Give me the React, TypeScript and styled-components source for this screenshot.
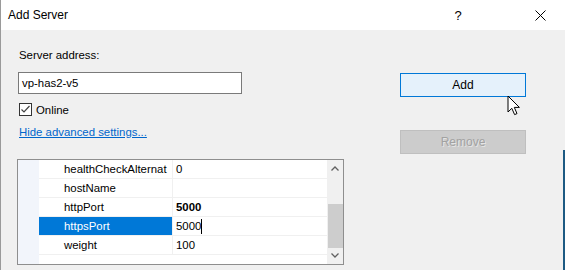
import styled, { createGlobalStyle } from 'styled-components'

const Global = createGlobalStyle`
  html, body {
    margin: 0;
    padding: 0;
    width: 565px;
    height: 270px;
    overflow: hidden;
    background: #f0f0f0;
  }
  * {
    box-sizing: border-box;
  }
`

const Window = styled.div`
  display: flex;
  flex-direction: column;
  width: 565px;
  height: 270px;
  border-left: 1px solid #9a9a9a;
  font-family: 'Segoe UI', 'Liberation Sans', Arial, sans-serif;
  font-size: 11.4px;
  color: #000;
  background: #f0f0f0;
  position: relative;

  /* desktop showing past the right edge */
  &::after {
    content: '';
    position: absolute;
    right: 0;
    top: 150px;
    bottom: 0;
    width: 2px;
    background: #1d5a83;
  }
`

const TitleBar = styled.div`
  display: flex;
  align-items: center;
  height: 30px;
  padding-left: 7px;
  padding-right: 2px;
  background: #fff;
  font-size: 12px;
`

const Title = styled.span`
  flex: 1;
`

const TitleButton = styled.span<{ $gap?: number }>`
  display: flex;
  align-items: center;
  justify-content: center;
  width: 46px;
  height: 30px;
  margin-right: ${(p) => p.$gap ?? 0}px;
  font-size: 13px;
`

const Body = styled.div`
  display: flex;
  flex: 1;
  padding: 0 39px 0 16px;
`

const LeftCol = styled.div`
  display: flex;
  flex-direction: column;
  width: 327px;
`

const Label = styled.div`
  margin-top: 18px;
  padding-left: 2px;
  line-height: 15px;
`

const TextBox = styled.div`
  margin-top: 9px;
  margin-left: 1px;
  width: 224px;
  height: 22px;
  padding-left: 3px;
  line-height: 20px;
  background: #fff;
  border: 1px solid #7a7a7a;
`

const CheckRow = styled.label`
  display: flex;
  align-items: center;
  gap: 4px;
  margin-top: 9px;
  margin-left: 2px;
  height: 13px;
`

const Box = styled.span`
  display: flex;
  align-items: center;
  justify-content: center;
  width: 13px;
  height: 13px;
  border: 1px solid #333;
  background: #fff;
`

const Link = styled.a`
  margin-top: 9px;
  margin-left: 2px;
  color: #0066cc;
  text-decoration: underline;
  line-height: 15px;
`

const Grid = styled.div`
  display: flex;
  margin-top: 19px;
  height: 106px;
  border: 1px solid #8e8e8e;
  background: #fff;
`

const Gutter = styled.div`
  width: 21px;
  background: #f2f5fb;
`

const Rows = styled.div`
  flex: 1;
  display: flex;
  flex-direction: column;
`

const Row = styled.div`
  display: flex;
  height: 19px;
  border-bottom: 1px solid #f0f0f0;
`

const NameCell = styled.div<{ $selected?: boolean }>`
  width: 134px;
  padding-left: 25px;
  line-height: 18px;
  white-space: nowrap;
  overflow: hidden;
  border-right: 1px solid #f0f0f0;
  background: ${(p) => (p.$selected ? '#0078d7' : 'transparent')};
  color: ${(p) => (p.$selected ? '#fff' : '#000')};
`

const ValueCell = styled.div<{ $bold?: boolean }>`
  flex: 1;
  display: flex;
  align-items: center;
  padding-left: 3px;
  font-weight: ${(p) => (p.$bold ? 700 : 400)};
`

const Caret = styled.span`
  width: 1px;
  height: 15px;
  background: #000;
`

const ScrollBar = styled.div`
  display: flex;
  flex-direction: column;
  align-items: center;
  width: 16px;
  background: #f0f0f0;
`

const Arrow = styled.div`
  display: flex;
  align-items: center;
  justify-content: center;
  width: 16px;
  height: 17px;
`

const Track = styled.div`
  flex: 1;
  width: 15px;
  display: flex;
  flex-direction: column;
  padding-top: 27px;
`

const Thumb = styled.div`
  width: 15px;
  height: 44px;
  background: #cdcdcd;
`

const RightCol = styled.div`
  display: flex;
  flex-direction: column;
  margin-left: auto;
  width: 126px;
  padding-top: 43px;
  gap: 33px;
`

const Button = styled.div<{ $disabled?: boolean; $hot?: boolean }>`
  display: flex;
  align-items: center;
  justify-content: center;
  height: 24px;
  font-size: 12px;
  border: 1px solid ${(p) => (p.$hot ? '#0078d7' : p.$disabled ? '#bfbfbf' : '#adadad')};
  background: ${(p) => (p.$hot ? '#e5f1fb' : p.$disabled ? '#cccccc' : '#e1e1e1')};
  color: ${(p) => (p.$disabled ? '#a2a2a2' : '#000')};
  text-shadow: ${(p) => (p.$disabled ? '1px 1px 0 rgba(255,255,255,0.5)' : 'none')};
`

const Cursor = styled.svg`
  position: absolute;
  left: 506px;
  top: 95px;
`

const rows = [
  { name: 'healthCheckAlternat', value: '0' },
  { name: 'hostName', value: '' },
  { name: 'httpPort', value: '5000', bold: true },
  { name: 'httpsPort', value: '5000', selected: true },
  { name: 'weight', value: '100' },
]

export default function App() {
  return (
    <Window>
      <Global />
      <TitleBar>
        <Title>Add Server</Title>
        <TitleButton $gap={36}>?</TitleButton>
        <TitleButton>
          <svg width='11' height='11' viewBox='0 0 11 11'>
            <path d='M0.5 0.5 L10.5 10.5 M10.5 0.5 L0.5 10.5' stroke='#000' strokeWidth='1' />
          </svg>
        </TitleButton>
      </TitleBar>
      <Body>
        <LeftCol>
          <Label>Server address:</Label>
          <TextBox>vp-has2-v5</TextBox>
          <CheckRow>
            <Box>
              <svg width='11' height='11' viewBox='0 0 11 11'>
                <path d='M1.5 5.5 L4 8 L9.5 2' stroke='#444' strokeWidth='1.2' fill='none' />
              </svg>
            </Box>
            Online
          </CheckRow>
          <Link>Hide advanced settings...</Link>
          <Grid>
            <Gutter />
            <Rows>
              {rows.map((r) => (
                <Row key={r.name}>
                  <NameCell $selected={r.selected}>{r.name}</NameCell>
                  <ValueCell $bold={r.bold}>
                    {r.value}
                    {r.selected && <Caret />}
                  </ValueCell>
                </Row>
              ))}
            </Rows>
            <ScrollBar>
              <Arrow>
                <svg width='8' height='5' viewBox='0 0 8 5'>
                  <path d='M0.5 4.5 L4 1 L7.5 4.5' stroke='#606060' strokeWidth='1.3' fill='none' />
                </svg>
              </Arrow>
              <Track>
                <Thumb />
              </Track>
              <Arrow>
                <svg width='8' height='5' viewBox='0 0 8 5'>
                  <path d='M0.5 0.5 L4 4 L7.5 0.5' stroke='#606060' strokeWidth='1.3' fill='none' />
                </svg>
              </Arrow>
            </ScrollBar>
          </Grid>
        </LeftCol>
        <RightCol>
          <Button $hot>Add</Button>
          <Button $disabled>Remove</Button>
        </RightCol>
      </Body>
      <Cursor width='14' height='22' viewBox='0 0 14 22'>
        <path
          d='M1 1 L1 17 L4.8 13.3 L7.6 19.6 L10 18.6 L7.3 12.4 L12.4 12.4 Z'
          fill='#fff'
          stroke='#000'
          strokeWidth='1'
          strokeLinejoin='miter'
        />
      </Cursor>
    </Window>
  )
}
